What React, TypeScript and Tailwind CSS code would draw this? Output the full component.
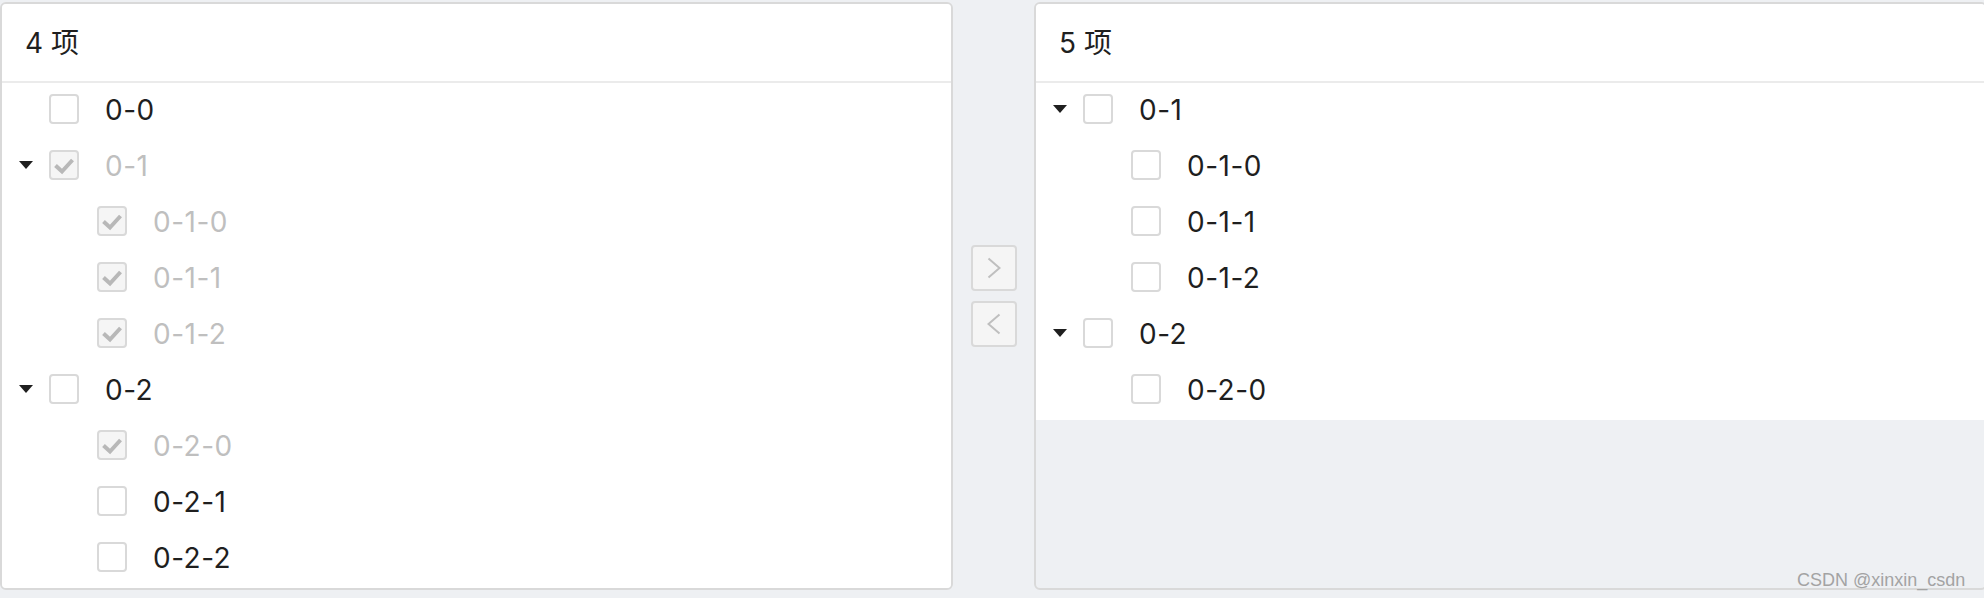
import React from 'react';

type Node = {
  key: string;
  level: number;
  caret?: boolean;
  checked?: boolean;
  disabled?: boolean;
};

const leftNodes: Node[] = [
  { key: '0-0', level: 0 },
  { key: '0-1', level: 0, caret: true, checked: true, disabled: true },
  { key: '0-1-0', level: 1, checked: true, disabled: true },
  { key: '0-1-1', level: 1, checked: true, disabled: true },
  { key: '0-1-2', level: 1, checked: true, disabled: true },
  { key: '0-2', level: 0, caret: true },
  { key: '0-2-0', level: 1, checked: true, disabled: true },
  { key: '0-2-1', level: 1 },
  { key: '0-2-2', level: 1 },
];

const rightNodes: Node[] = [
  { key: '0-1', level: 0, caret: true },
  { key: '0-1-0', level: 1 },
  { key: '0-1-1', level: 1 },
  { key: '0-1-2', level: 1 },
  { key: '0-2', level: 0, caret: true },
  { key: '0-2-0', level: 1 },
];

const Checkbox: React.FC<{ checked?: boolean; disabled?: boolean }> = ({ checked, disabled }) => (
  <span
    className={
      disabled
        ? 'flex h-[30px] w-[30px] shrink-0 items-center justify-center rounded-[4px] border-2 border-[#d9d9d9] bg-[#f5f5f5]'
        : 'flex h-[30px] w-[30px] shrink-0 items-center justify-center rounded-[4px] border-2 border-[#d9d9d9] bg-white'
    }
  >
    {checked && (
      <svg width="26" height="26" viewBox="0 0 26 26">
        <path d="M4.5 13.5 L11 19.5 L21.5 8" fill="none" stroke="#b8b8b8" strokeWidth="4" />
      </svg>
    )}
  </span>
);

const Caret = () => (
  <svg width="14" height="8" viewBox="0 0 14 8">
    <path d="M0 0 H14 L7 8 Z" fill="#1f1f1f" />
  </svg>
);

const TreeRow: React.FC<{ node: Node }> = ({ node }) => (
  <div className="mb-[6px] flex h-[50px] items-center" style={{ paddingLeft: node.level * 48 }}>
    <span className="flex w-[47px] shrink-0 items-center justify-center">{node.caret && <Caret />}</span>
    <Checkbox checked={node.checked} disabled={node.disabled} />
    <span
      className={
        node.disabled
          ? 'ml-[26px] pt-[2px] tracking-[0.5px] text-[#bfbfbf]'
          : 'ml-[26px] pt-[2px] tracking-[0.5px] text-[#1f1f1f]'
      }
    >
      {node.key}
    </span>
  </div>
);

const Panel: React.FC<{ title: string; nodes: Node[]; fill?: boolean }> = ({ title, nodes, fill }) => (
  <div className="flex h-[588px] w-[953px] shrink-0 flex-col overflow-hidden rounded-[6px] border-2 border-[#d9d9d9]">
    <div className="flex h-[79px] shrink-0 items-center border-b-2 border-[#ebebeb] bg-white pl-[23px] text-[#1f1f1f]">
      {title}
    </div>
    <div className={fill ? 'flex-1 bg-white pt-[1px]' : 'bg-white pt-[1px]'}>
      {nodes.map((n, i) => (
        <TreeRow key={i} node={n} />
      ))}
    </div>
  </div>
);

const ArrowButton: React.FC<{ dir: 'right' | 'left' }> = ({ dir }) => (
  <button className="flex h-[46px] w-[46px] items-center justify-center rounded-[4px] border-2 border-[#d9d9d9] bg-[#f5f5f5]">
    <svg width="14" height="22" viewBox="0 0 14 22">
      <path
        d={dir === 'right' ? 'M1.5 1.5 L12.5 11 L1.5 20.5' : 'M12.5 1.5 L1.5 11 L12.5 20.5'}
        fill="none"
        stroke="#bfbfbf"
        strokeWidth="2"
      />
    </svg>
  </button>
);

export default function App() {
  return (
    <div
      className="relative h-[598px] w-[1984px] overflow-hidden bg-[#eef0f3] text-[28px] leading-none"
      style={{ fontFamily: 'Inter, "Noto Sans CJK SC", sans-serif' }}
    >
      <div className="flex w-[1988px] pt-[2px]">
        <Panel title="4 项" nodes={leftNodes} fill />
        <div className="flex w-[81px] shrink-0 flex-col items-center justify-center gap-[10px]">
          <ArrowButton dir="right" />
          <ArrowButton dir="left" />
        </div>
        <Panel title="5 项" nodes={rightNodes} />
      </div>
      <span
        className="absolute left-[1797px] top-[571px] text-[18px] leading-none text-[#a3a3a3]"
        style={{ fontFamily: '"Liberation Sans", Arial, sans-serif' }}
      >
        CSDN @xinxin_csdn
      </span>
    </div>
  );
}
